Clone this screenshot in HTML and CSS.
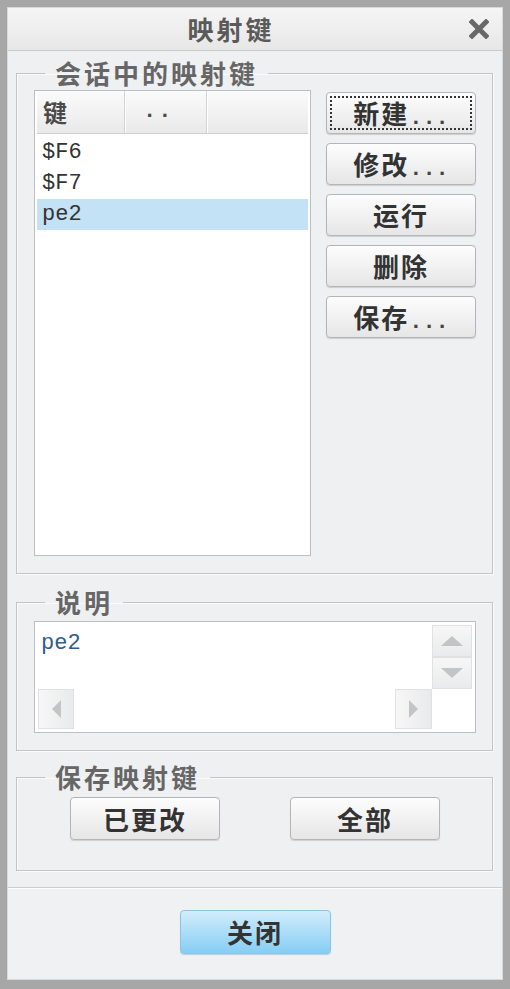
FILE: index.html
```html
<!DOCTYPE html>
<html lang="zh-CN">
<head>
  <meta charset="UTF-8">
  <title>映射键</title>
  <link rel="stylesheet" href="styles.css">
</head>
<body>
  <div class="window">
    <!-- Title bar -->
    <div class="titlebar">
      <div class="title">映射键</div>
      <div class="close">
        <svg width="20" height="20" viewBox="0 0 20 20">
          <path d="M3 3 L17 17 M17 3 L3 17" stroke="#686868" stroke-width="5" stroke-linecap="square"/>
        </svg>
      </div>
    </div>

    <div class="main">
      <!-- Session mapkeys -->
      <fieldset class="group">
        <legend>会话中的映射键</legend>
        <div class="session">
          <div class="list">
            <div class="list-head">
              <div class="col col-1">键</div>
              <div class="col col-2 dots">..</div>
              <div class="col col-3"></div>
            </div>
            <div class="rows">
              <div class="row">$F6</div>
              <div class="row">$F7</div>
              <div class="row selected">pe2</div>
            </div>
          </div>
          <div class="actions">
            <button class="btn focused">新建<span class="dots">...</span></button>
            <button class="btn">修改<span class="dots">...</span></button>
            <button class="btn">运行</button>
            <button class="btn">删除</button>
            <button class="btn">保存<span class="dots">...</span></button>
          </div>
        </div>
      </fieldset>

      <!-- Description -->
      <fieldset class="group desc">
        <legend>说明</legend>
        <div class="textbox">
          <div class="text">pe2</div>
          <div class="vscroll">
            <div class="sb-btn"><span class="tri up"></span></div>
            <div class="sb-btn"><span class="tri down"></span></div>
          </div>
          <div class="hscroll">
            <div class="sb-btn"><span class="tri left"></span></div>
            <div class="track"></div>
            <div class="sb-btn"><span class="tri right"></span></div>
          </div>
          <div class="corner"></div>
        </div>
      </fieldset>

      <!-- Save mapkeys -->
      <fieldset class="group save">
        <legend>保存映射键</legend>
        <div class="save-row">
          <button class="btn">已更改</button>
          <button class="btn">全部</button>
        </div>
      </fieldset>
    </div>

    <div class="footer">
      <button class="btn primary">关闭</button>
    </div>
  </div>
</body>
</html>
```

FILE: styles.css
```css
body {
  margin: 0;
  background: #a8a8a8;
  font-family: "Noto Sans CJK SC", sans-serif;
}

.window {
  box-sizing: border-box;
  width: 510px;
  height: 989px;
  border: 7px solid #a7a7a7;
  border-bottom-width: 9px;
  box-shadow: inset 0 0 0 1px #d9d9d9;
  background: #eff0f1;
  display: flex;
  flex-direction: column;
  padding: 1px;
}

/* title bar */
.titlebar {
  height: 42px;
  display: flex;
  align-items: center;
  background: linear-gradient(#f5f5f5, #e7e7e7);
  border-bottom: 1px solid #c9caca;
}

.title {
  flex: 1;
  text-align: center;
  font-size: 26px;
  font-weight: 700;
  letter-spacing: 3px;
  color: #5a5a5a;
  line-height: 42px;
}

.close {
  width: 46px;
  display: flex;
  justify-content: center;
  align-items: center;
  padding-left: 2px;
}

.main {
  padding: 9px 9px 16px 8px;
}

/* group boxes */
.group {
  margin: 0;
  padding: 4px 16px 17px 17px;
  border: 1px solid #c3c4c6;
  box-shadow: inset 1px 1px 0 #fafafa, 1px 1px 0 #fafafa;
  min-inline-size: 0;
}

.group legend {
  margin-left: 11px;
  padding: 0 10px;
  font-size: 26px;
  line-height: 26px;
  font-weight: 700;
  letter-spacing: 3px;
  color: #666;
}

.desc {
  margin-top: 15px;
  padding-top: 6px;
}

.save {
  margin-top: 13px;
  padding-top: 7px;
  padding-bottom: 30px;
}

/* session list */
.session {
  display: flex;
  gap: 15px;
}

.list {
  box-sizing: border-box;
  width: 277px;
  height: 466px;
  border: 1px solid #bdbebf;
  background: #fff;
  padding: 0 2px 2px;
}

.list-head {
  display: flex;
  height: 42px;
  background: linear-gradient(#fbfbfb, #e9e9e9);
  border-bottom: 1px solid #cfcfcf;
}

.col {
  box-sizing: border-box;
  border-right: 1px solid #d4d4d4;
  box-shadow: 1px 0 0 #fff;
  font-size: 24px;
  font-weight: 700;
  color: #4a4a4a;
  line-height: 42px;
  padding-left: 6px;
}

.col-1 { width: 88px; }
.col-2 { width: 82px; padding-left: 18px; letter-spacing: 2px; }
.col-3 { flex: 1; border-right: none; box-shadow: none; }

.dots {
  font-family: "Liberation Mono", monospace;
  font-size: 22px;
  font-weight: 700;
}

.rows {
  padding-top: 3px;
}

.row {
  height: 31px;
  line-height: 31px;
  padding-left: 5px;
  font-family: "Liberation Mono", monospace;
  font-size: 22px;
  color: #333;
}

.row.selected {
  background: #c4e2f5;
}

/* buttons */
.actions {
  display: flex;
  flex-direction: column;
  gap: 9px;
  padding-top: 2px;
}

.btn {
  box-sizing: border-box;
  width: 150px;
  height: 42px;
  border: 1px solid #b4b5b6;
  border-radius: 4px;
  background: linear-gradient(#fdfdfd, #e6e6e6);
  box-shadow: 0 1px 1px #cfcfcf;
  font-family: "Noto Sans CJK SC", sans-serif;
  font-size: 26px;
  font-weight: 700;
  letter-spacing: 2px;
  color: #333;
  padding: 0;
  line-height: 40px;
}

.btn .dots {
  color: #444;
  letter-spacing: 0;
}

.btn.focused {
  outline: 2px dotted #333;
  outline-offset: -6px;
}

.save-row {
  display: flex;
  gap: 70px;
  padding-left: 36px;
}

.save-row .btn {
  height: 43px;
}

.footer {
  flex: 1;
  border-top: 1px solid #cbcccd;
  box-shadow: inset 0 1px 0 #fcfcfc;
  background: #f0f1f2;
  display: flex;
  justify-content: center;
  align-items: flex-start;
  padding-top: 22px;
}

.btn.primary {
  width: 151px;
  height: 44px;
  border-color: #8ec4e3;
  background: linear-gradient(#d2edfb, #86cdf4);
  box-shadow: 0 1px 1px #b6cfdd;
}

/* description text box */
.textbox {
  box-sizing: border-box;
  height: 112px;
  border: 1px solid #bdbebf;
  background: #fff;
  padding: 3px;
  display: grid;
  grid-template-columns: 1fr 40px;
  grid-template-rows: 64px 40px;
}

.text {
  font-family: "Liberation Mono", monospace;
  font-size: 22px;
  color: #2f5d8c;
  padding: 6px 0 0 3px;
}

.vscroll {
  display: grid;
  grid-template-rows: 1fr 1fr;
}

.hscroll {
  display: grid;
  grid-template-columns: 36px 1fr 37px;
}

.track {
  background: #fff;
}

.sb-btn {
  box-sizing: border-box;
  border: 1px solid #e0e1e2;
  background: linear-gradient(90deg, #f7f7f7, #e9eaeb);
  display: flex;
  justify-content: center;
  align-items: center;
}

.vscroll .sb-btn {
  background: linear-gradient(#f7f7f7, #e9eaeb);
}

.tri {
  width: 0;
  height: 0;
  border: 8px solid transparent;
}

.tri.up { border-bottom: 10px solid #c3c4c5; border-top: none; border-width: 0 11px 10px; }
.tri.down { border-top: 10px solid #c3c4c5; border-bottom: none; border-width: 10px 11px 0; }
.tri.left { border-right: 9px solid #c3c4c5; border-left: none; border-width: 9px 9px 9px 0; }
.tri.right { border-left: 9px solid #c3c4c5; border-right: none; border-width: 9px 0 9px 9px; }
```
